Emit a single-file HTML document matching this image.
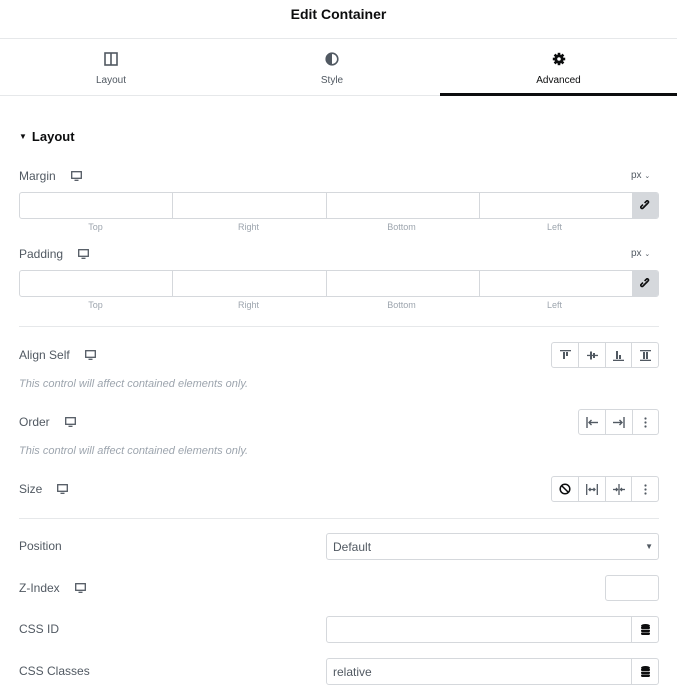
<!DOCTYPE html>
<html><head><meta charset="utf-8"><style>
*{box-sizing:border-box;margin:0;padding:0}
body{width:677px;height:700px;overflow:hidden;background:#fff;font-family:"Liberation Sans",sans-serif;color:#515962;position:relative}
.a{position:absolute}
.lbl{font-size:12px;color:#515962;line-height:14px}
.mon{display:inline-block;vertical-align:middle;margin-left:15px}
.note{font-size:11px;font-style:italic;color:#9da5ae}
.box{border:1px solid #d5d8dc;border-radius:3px;background:#fff}
.sub{font-size:9px;color:#9da5ae;text-align:center;width:153px}
.hr{height:1px;background:#e6e8ea;left:19px;width:640px}
.bg{display:flex;border:1px solid #d5d8dc;border-radius:3px;height:26px}
.bg div{width:27px;border-left:1px solid #d5d8dc;display:flex;align-items:center;justify-content:center}
.bg div:first-child{border-left:none}
</style></head><body>
<div class="a" style="top:6px;left:0;width:677px;text-align:center;font-size:14px;font-weight:bold;color:#0c0d0e">Edit Container</div>
<div class="a" style="top:38px;left:0;width:677px;height:1px;background:#e6e8ea"></div>
<!-- tabs -->
<div class="a" style="top:52px;left:104px"><svg width="14" height="14" viewBox="0 0 14 14"><rect x="1" y="1" width="12" height="12" fill="none" stroke="#515962" stroke-width="1.6"/><line x1="7" y1="1" x2="7" y2="13" stroke="#515962" stroke-width="1.6"/></svg></div>
<div class="a" style="top:75px;left:0;width:222px;text-align:center;font-size:10px">Layout</div>
<div class="a" style="top:52px;left:325px"><svg width="14" height="14" viewBox="0 0 14 14"><circle cx="7" cy="7" r="5.8" fill="none" stroke="#515962" stroke-width="1.6"/><path d="M7 1.2A5.8 5.8 0 0 0 7 12.8Z" fill="#515962"/></svg></div>
<div class="a" style="top:75px;left:222px;width:220px;text-align:center;font-size:10px">Style</div>
<div class="a" style="top:52px;left:552px"><svg width="14" height="14" viewBox="0 0 14 14"><g fill="#0c0d0e"><circle cx="7" cy="7" r="4.6"/><g stroke="#0c0d0e" stroke-width="2.6"><line x1="7" y1="0.8" x2="7" y2="13.2"/><line x1="0.8" y1="7" x2="13.2" y2="7"/><line x1="2.6" y1="2.6" x2="11.4" y2="11.4"/><line x1="11.4" y1="2.6" x2="2.6" y2="11.4"/></g></g><circle cx="7" cy="7" r="1.8" fill="#fff"/></svg></div>
<div class="a" style="top:75px;left:440px;width:237px;text-align:center;font-size:10px;color:#0c0d0e">Advanced</div>
<div class="a" style="top:95px;left:0;width:677px;height:1px;background:#e6e8ea"></div>
<div class="a" style="top:93px;left:440px;width:237px;height:3px;background:#0c0d0e"></div>
<!-- Layout heading -->
<div class="a" style="top:129px;left:19px;font-size:13px;font-weight:bold;color:#0c0d0e"><span style="font-size:8px;vertical-align:2px;margin-right:5px">&#9660;</span>Layout</div>

<div class="a lbl" style="top:169px;left:19px">Margin<span class="mon"><svg width="11" height="10" viewBox="0 0 11 10"><rect x="0.7" y="0.7" width="9.6" height="6.6" fill="none" stroke="#515962" stroke-width="1.3"/><line x1="3.5" y1="9.3" x2="7.5" y2="9.3" stroke="#515962" stroke-width="1.3"/></svg></span></div>
<div class="a" style="top:170px;left:631px;font-size:10px">px <span style="font-size:7px">&#8964;</span></div>
<div class="a box" style="top:192px;left:19px;width:640px;height:27px;display:flex;overflow:hidden">
<div style="width:153px;border-right:1px solid #d5d8dc"></div><div style="width:154px;border-right:1px solid #d5d8dc"></div><div style="width:153px;border-right:1px solid #d5d8dc"></div><div style="width:152px"></div>
<div style="flex:1;background:#d5d8dc;display:flex;align-items:center;justify-content:center"><svg width="11" height="11" viewBox="0 0 11 11"><g fill="none" stroke="#0c0d0e" stroke-width="1.6"><path d="M4.5 6.5L2.6 8.4A1.3 1.3 0 0 1 0.9 6.7L3 4.6"/><path d="M6.5 4.5L8.4 2.6A1.3 1.3 0 0 0 6.7 0.9L4.6 3"/><line x1="4" y1="7" x2="7" y2="4"/></g></svg></div></div>
<div class="a sub" style="top:222px;left:19px">Top</div><div class="a sub" style="top:222px;left:172px">Right</div><div class="a sub" style="top:222px;left:325px">Bottom</div><div class="a sub" style="top:222px;left:478px">Left</div>

<div class="a lbl" style="top:247px;left:19px">Padding<span class="mon"><svg width="11" height="10" viewBox="0 0 11 10"><rect x="0.7" y="0.7" width="9.6" height="6.6" fill="none" stroke="#515962" stroke-width="1.3"/><line x1="3.5" y1="9.3" x2="7.5" y2="9.3" stroke="#515962" stroke-width="1.3"/></svg></span></div>
<div class="a" style="top:248px;left:631px;font-size:10px">px <span style="font-size:7px">&#8964;</span></div>
<div class="a box" style="top:270px;left:19px;width:640px;height:27px;display:flex;overflow:hidden">
<div style="width:153px;border-right:1px solid #d5d8dc"></div><div style="width:154px;border-right:1px solid #d5d8dc"></div><div style="width:153px;border-right:1px solid #d5d8dc"></div><div style="width:152px"></div>
<div style="flex:1;background:#d5d8dc;display:flex;align-items:center;justify-content:center"><svg width="11" height="11" viewBox="0 0 11 11"><g fill="none" stroke="#0c0d0e" stroke-width="1.6"><path d="M4.5 6.5L2.6 8.4A1.3 1.3 0 0 1 0.9 6.7L3 4.6"/><path d="M6.5 4.5L8.4 2.6A1.3 1.3 0 0 0 6.7 0.9L4.6 3"/><line x1="4" y1="7" x2="7" y2="4"/></g></svg></div></div>
<div class="a sub" style="top:300px;left:19px">Top</div><div class="a sub" style="top:300px;left:172px">Right</div><div class="a sub" style="top:300px;left:325px">Bottom</div><div class="a sub" style="top:300px;left:478px">Left</div>

<div class="a hr" style="top:326px"></div>

<div class="a lbl" style="top:348px;left:19px">Align Self<span class="mon"><svg width="11" height="10" viewBox="0 0 11 10"><rect x="0.7" y="0.7" width="9.6" height="6.6" fill="none" stroke="#515962" stroke-width="1.3"/><line x1="3.5" y1="9.3" x2="7.5" y2="9.3" stroke="#515962" stroke-width="1.3"/></svg></span></div>
<div class="a bg" style="top:342px;left:551px;width:108px">
<div><svg width="11" height="11" viewBox="0 0 11 11" fill="#515962"><rect x="0" y="0" width="11" height="1.3"/><rect x="3" y="2" width="2" height="7"/><rect x="6" y="2" width="2" height="4"/></svg></div>
<div><svg width="11" height="11" viewBox="0 0 11 11" fill="#515962"><rect x="0" y="4.8" width="11" height="1.3"/><rect x="3" y="1.5" width="2" height="8"/><rect x="6" y="3" width="2" height="5"/></svg></div>
<div><svg width="11" height="11" viewBox="0 0 11 11" fill="#515962"><rect x="0" y="9.7" width="11" height="1.3"/><rect x="3" y="1" width="2" height="8"/><rect x="6" y="5" width="2" height="4"/></svg></div>
<div><svg width="11" height="11" viewBox="0 0 11 11" fill="#515962"><rect x="0" y="0" width="11" height="1.3"/><rect x="0" y="9.7" width="11" height="1.3"/><rect x="3" y="2" width="2" height="7"/><rect x="6" y="2" width="2" height="7"/></svg></div>
</div>
<div class="a note" style="top:378px;left:19px">This control will affect contained elements only.</div>

<div class="a lbl" style="top:415px;left:19px">Order<span class="mon"><svg width="11" height="10" viewBox="0 0 11 10"><rect x="0.7" y="0.7" width="9.6" height="6.6" fill="none" stroke="#515962" stroke-width="1.3"/><line x1="3.5" y1="9.3" x2="7.5" y2="9.3" stroke="#515962" stroke-width="1.3"/></svg></span></div>
<div class="a bg" style="top:409px;left:578px;width:81px">
<div><svg width="12" height="11" viewBox="0 0 12 11" fill="none" stroke="#515962" stroke-width="1.4"><line x1="1" y1="0" x2="1" y2="11"/><line x1="3" y1="5.5" x2="12" y2="5.5"/><path d="M5.5 3L3 5.5 5.5 8"/></svg></div>
<div><svg width="12" height="11" viewBox="0 0 12 11" fill="none" stroke="#515962" stroke-width="1.4"><line x1="11" y1="0" x2="11" y2="11"/><line x1="0" y1="5.5" x2="9" y2="5.5"/><path d="M6.5 3L9 5.5 6.5 8"/></svg></div>
<div><svg width="3" height="11" viewBox="0 0 3 11" fill="#515962"><circle cx="1.5" cy="1.5" r="1.1"/><circle cx="1.5" cy="5.5" r="1.1"/><circle cx="1.5" cy="9.5" r="1.1"/></svg></div>
</div>
<div class="a note" style="top:445px;left:19px">This control will affect contained elements only.</div>

<div class="a lbl" style="top:482px;left:19px">Size<span class="mon"><svg width="11" height="10" viewBox="0 0 11 10"><rect x="0.7" y="0.7" width="9.6" height="6.6" fill="none" stroke="#515962" stroke-width="1.3"/><line x1="3.5" y1="9.3" x2="7.5" y2="9.3" stroke="#515962" stroke-width="1.3"/></svg></span></div>
<div class="a bg" style="top:476px;left:551px;width:108px">
<div><svg width="12" height="12" viewBox="0 0 12 12" fill="none" stroke="#0c0d0e" stroke-width="1.5"><circle cx="6" cy="6" r="4.8"/><line x1="2.6" y1="2.6" x2="9.4" y2="9.4"/></svg></div>
<div><svg width="12" height="11" viewBox="0 0 12 11" fill="none" stroke="#515962" stroke-width="1.3"><line x1="0.7" y1="0" x2="0.7" y2="11"/><line x1="11.3" y1="0" x2="11.3" y2="11"/><line x1="3" y1="5.5" x2="9" y2="5.5"/><path d="M4.5 4L3 5.5 4.5 7M7.5 4L9 5.5 7.5 7"/></svg></div>
<div><svg width="12" height="11" viewBox="0 0 12 11" fill="none" stroke="#515962" stroke-width="1.3"><line x1="6" y1="0" x2="6" y2="11"/><line x1="0" y1="5.5" x2="4.5" y2="5.5"/><line x1="7.5" y1="5.5" x2="12" y2="5.5"/><path d="M3 4L4.5 5.5 3 7M9 4L7.5 5.5 9 7"/></svg></div>
<div><svg width="3" height="11" viewBox="0 0 3 11" fill="#515962"><circle cx="1.5" cy="1.5" r="1.1"/><circle cx="1.5" cy="5.5" r="1.1"/><circle cx="1.5" cy="9.5" r="1.1"/></svg></div>
</div>

<div class="a hr" style="top:518px"></div>

<div class="a lbl" style="top:539px;left:19px">Position</div>
<div class="a box" style="top:533px;left:326px;width:333px;height:27px;font-size:12px;padding:6px 0 0 6px">Default<span class="a" style="right:5px;top:8px;font-size:8px">&#9660;</span></div>

<div class="a lbl" style="top:581px;left:19px">Z-Index<span class="mon"><svg width="11" height="10" viewBox="0 0 11 10"><rect x="0.7" y="0.7" width="9.6" height="6.6" fill="none" stroke="#515962" stroke-width="1.3"/><line x1="3.5" y1="9.3" x2="7.5" y2="9.3" stroke="#515962" stroke-width="1.3"/></svg></span></div>
<div class="a box" style="top:575px;left:605px;width:54px;height:26px"></div>

<div class="a lbl" style="top:622px;left:19px">CSS ID</div>
<div class="a box" style="top:616px;left:326px;width:333px;height:27px;display:flex"><div style="flex:1"></div><div style="width:27px;border-left:1px solid #d5d8dc;display:flex;align-items:center;justify-content:center"><svg width="9" height="11" viewBox="0 0 9 11" fill="#0c0d0e"><ellipse cx="4.5" cy="1.8" rx="4.5" ry="1.8"/><rect x="0" y="2.6" width="9" height="2.4" rx="1"/><rect x="0" y="5.6" width="9" height="2.4" rx="1"/><rect x="0" y="8.4" width="9" height="2.6" rx="1.2"/></svg></div></div>

<div class="a lbl" style="top:664px;left:19px">CSS Classes</div>
<div class="a box" style="top:658px;left:326px;width:333px;height:27px;display:flex"><div style="flex:1;font-size:12px;padding:6px 0 0 6px">relative</div><div style="width:27px;border-left:1px solid #d5d8dc;display:flex;align-items:center;justify-content:center"><svg width="9" height="11" viewBox="0 0 9 11" fill="#0c0d0e"><ellipse cx="4.5" cy="1.8" rx="4.5" ry="1.8"/><rect x="0" y="2.6" width="9" height="2.4" rx="1"/><rect x="0" y="5.6" width="9" height="2.4" rx="1"/><rect x="0" y="8.4" width="9" height="2.6" rx="1.2"/></svg></div></div>
</body></html>
